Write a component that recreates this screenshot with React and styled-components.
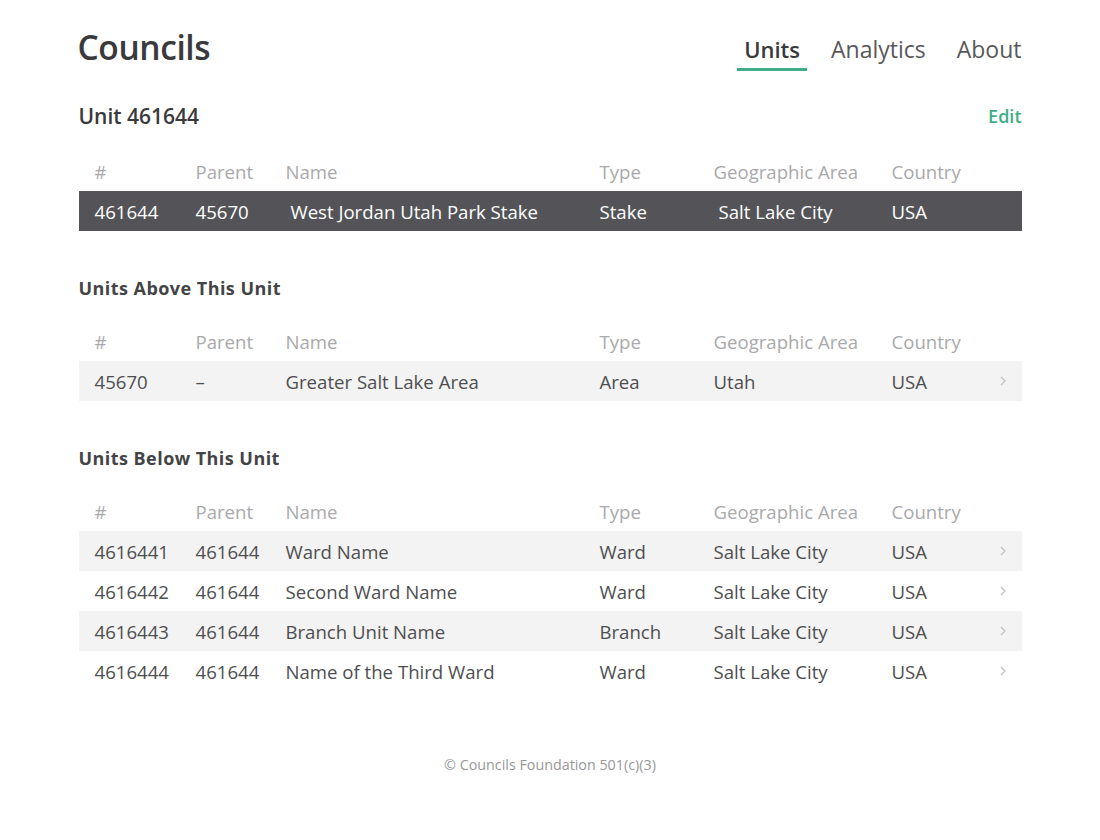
import React from 'react';
import styled, { createGlobalStyle } from 'styled-components';

const GlobalStyle = createGlobalStyle`
  body {
    margin: 0;
    background: #ffffff;
    font-family: "Open Sans", "Noto Sans", sans-serif;
    color: #4a4a4c;
  }
`;

const Page = styled.div`
  max-width: 943px;
  margin: 0 auto;
  padding-top: 25px;
`;

const Header = styled.header`
  display: flex;
  justify-content: space-between;
  align-items: flex-start;
`;

const Logo = styled.h1`
  margin: 0 0 0 -1px;
  font-size: 33.5px;
  line-height: 44px;
  font-weight: 600;
  color: #3a3a3c;
  letter-spacing: -0.4px;
`;

const Nav = styled.nav`
  display: flex;
  gap: 17px;
  margin-top: 9px;
`;

const NavItem = styled.a`
  padding: 0 7px 4px;
  font-size: ${p => (p.$active ? '22px' : '23px')};
  line-height: 30px;
  color: ${p => (p.$active ? '#3a3a3c' : '#58585a')};
  font-weight: ${p => (p.$active ? 600 : 400)};
  border-bottom: 3px solid ${p => (p.$active ? '#3fae88' : 'transparent')};
  text-decoration: none;
  cursor: pointer;
  &:last-child {
    padding-right: 0;
  }
`;

const UnitBar = styled.div`
  display: flex;
  justify-content: space-between;
  align-items: center;
  margin-top: 31px;
  margin-bottom: 21px;
`;

const UnitTitle = styled.h2`
  margin: 0;
  font-size: 21px;
  line-height: 28px;
  font-weight: 600;
  color: #3a3a3c;
`;

const EditLink = styled.a`
  font-size: 18px;
  font-weight: 600;
  color: #3fae88;
  cursor: pointer;
`;

const SectionTitle = styled.h3`
  margin: 45px 0 21px;
  font-size: 18px;
  line-height: 24px;
  font-weight: 700;
  letter-spacing: 0.45px;
  color: #444446;
`;

const Row = styled.div`
  display: grid;
  grid-template-columns: 101px 90px 314px 114px 178px 1fr;
  align-items: center;
  height: 40px;
  padding-left: 16px;
  font-size: 18.6px;
  background: ${p =>
    p.$selected ? '#545458' : p.$shaded ? '#f3f3f3' : 'transparent'};
  color: ${p => (p.$head ? '#a9a9ab' : p.$selected ? '#ffffff' : '#4e4e50')};
  cursor: ${p => (p.$head ? 'default' : 'pointer')};
`;

const Cell = styled.div`
  white-space: nowrap;
  padding-left: ${p => (p.$shift ? '5px' : '0')};
  display: flex;
  align-items: center;
  justify-content: space-between;
`;

const Chevron = styled.svg`
  width: 10px;
  height: 12px;
  margin-right: 14px;
  stroke: #c4c4c6;
  fill: none;
  stroke-width: 1.4;
`;

const Footer = styled.footer`
  margin-top: 64px;
  padding-bottom: 40px;
  text-align: center;
  font-size: 14.3px;
  line-height: 20px;
  color: #98989a;
`;

const columns = ['#', 'Parent', 'Name', 'Type', 'Geographic Area', 'Country'];

const above = [['45670', '–', 'Greater Salt Lake Area', 'Area', 'Utah', 'USA']];

const below = [
  ['4616441', '461644', 'Ward Name', 'Ward', 'Salt Lake City', 'USA'],
  ['4616442', '461644', 'Second Ward Name', 'Ward', 'Salt Lake City', 'USA'],
  ['4616443', '461644', 'Branch Unit Name', 'Branch', 'Salt Lake City', 'USA'],
  ['4616444', '461644', 'Name of the Third Ward', 'Ward', 'Salt Lake City', 'USA'],
];

const HeadRow = () => (
  <Row $head>
    {columns.map(c => (
      <Cell key={c}>{c}</Cell>
    ))}
  </Row>
);

const UnitTable = ({ rows }) => (
  <div>
    <HeadRow />
    {rows.map((r, i) => (
      <Row key={r[0]} $shaded={i % 2 === 0}>
        {r.map((v, j) => (
          <Cell key={j}>
            {v}
            {j === 5 && (
              <Chevron viewBox="0 0 10 12">
                <path d="M3 2 L7 6 L3 10" />
              </Chevron>
            )}
          </Cell>
        ))}
      </Row>
    ))}
  </div>
);

const App = () => {
  const current = ['461644', '45670', 'West Jordan Utah Park Stake', 'Stake', 'Salt Lake City', 'USA'];
  return (
    <Page>
      <GlobalStyle />
      <Header>
        <Logo>Councils</Logo>
        <Nav>
          <NavItem $active>Units</NavItem>
          <NavItem>Analytics</NavItem>
          <NavItem>About</NavItem>
        </Nav>
      </Header>

      <UnitBar>
        <UnitTitle>Unit 461644</UnitTitle>
        <EditLink>Edit</EditLink>
      </UnitBar>
      <div>
        <HeadRow />
        <Row $selected>
          {current.map((v, j) => (
            <Cell key={j} $shift={j === 2 || j === 4}>
              {v}
            </Cell>
          ))}
        </Row>
      </div>

      <SectionTitle>Units Above This Unit</SectionTitle>
      <UnitTable rows={above} />

      <SectionTitle>Units Below This Unit</SectionTitle>
      <UnitTable rows={below} />

      <Footer>© Councils Foundation 501(c)(3)</Footer>
    </Page>
  );
};

export default App;
